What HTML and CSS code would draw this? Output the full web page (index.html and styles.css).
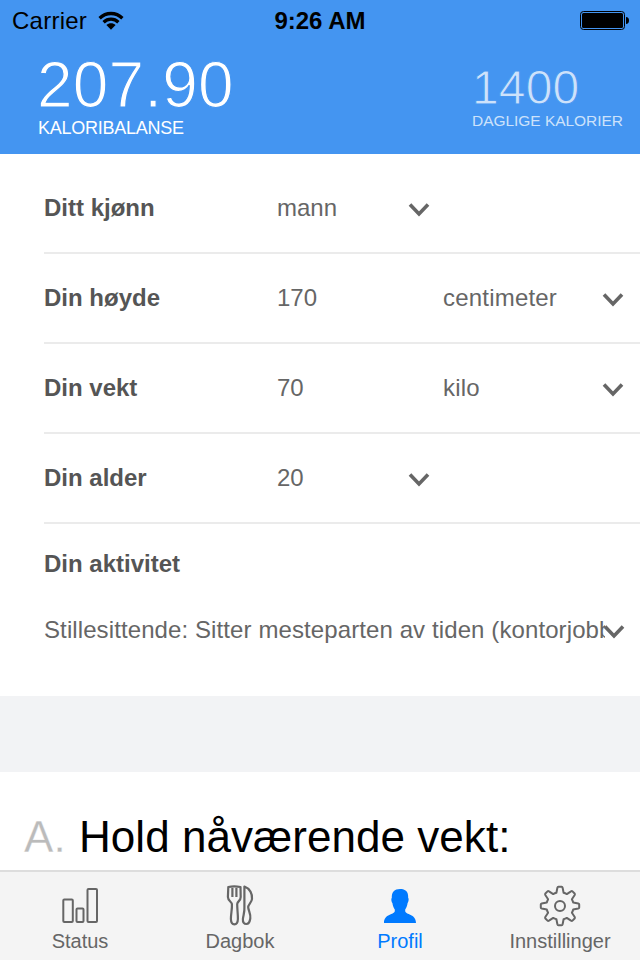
FILE: index.html
```html
<!DOCTYPE html>
<html lang="no">
<head>
<meta charset="utf-8">
<title>Profil</title>
<link rel="stylesheet" href="styles.css">
</head>
<body>
<div class="app">
  <header class="header">
    <div class="statusbar">
      <div class="carrier">
        <span>Carrier</span>
        <svg class="wifi" width="26" height="20" viewBox="0 0 26 20"><g fill="none" stroke="#000" stroke-width="3.3"><path d="M1.6 7.2C8 .9 18 .9 24.4 7.2"/><path d="M5.6 11.2C9.8 7.2 16.2 7.2 20.4 11.2"/></g><path d="M8.4 14.1C11 11.6 15 11.6 17.6 14.1L13 18.8z"/></svg>
      </div>
      <div class="time">9:26 AM</div>
      <svg class="battery" width="50" height="20" viewBox="0 0 50 20"><rect x=".5" y=".5" width="44" height="18" rx="3" fill="none" stroke="#000"/><rect x="2" y="2" width="41" height="15" rx="1.5"/><path d="M46 6c2 0 3 1.500 3 3.500s-1 3.500-3 3.500z"/></svg>
    </div>
    <div class="totals">
      <div class="balance"><div class="big">207.90</div><div class="caption">KALORIBALANSE</div></div>
      <div class="daily"><div class="big">1400</div><div class="caption">DAGLIGE KALORIER</div></div>
    </div>
  </header>
  <main class="content">
    <section class="form">
      <div class="row"><b>Ditt kjønn</b><div class="field short"><span>mann</span><svg class="chevron" width="22" height="16" viewBox="0 0 22 16"><path d="M2 2.500L11 12L20 2.500"/></svg></div></div>
      <div class="row"><b>Din høyde</b><div class="field number">170</div><div class="field unit"><span>centimeter</span><svg class="chevron" width="22" height="16" viewBox="0 0 22 16"><path d="M2 2.500L11 12L20 2.500"/></svg></div></div>
      <div class="row"><b>Din vekt</b><div class="field number">70</div><div class="field unit"><span>kilo</span><svg class="chevron" width="22" height="16" viewBox="0 0 22 16"><path d="M2 2.500L11 12L20 2.500"/></svg></div></div>
      <div class="row"><b>Din alder</b><div class="field short"><span>20</span><svg class="chevron" width="22" height="16" viewBox="0 0 22 16"><path d="M2 2.500L11 12L20 2.500"/></svg></div></div>
      <div class="activity">
        <b>Din aktivitet</b>
        <div class="select"><span>Stillesittende: Sitter mesteparten av tiden (kontorjobb)</span><svg class="chevron" width="22" height="16" viewBox="0 0 22 16"><path d="M2 2.500L11 12L20 2.500"/></svg></div>
      </div>
    </section>
    <div class="gap"></div>
    <h1 class="plan"><span class="letter">A.</span><span>Hold nåværende vekt:</span></h1>
  </main>
  <nav class="tabs">
    <div class="tab"><svg width="44" height="44" viewBox="0 0 44 44"><g fill="none" stroke="#666" stroke-width="2"><rect x="5.300" y="15.500" width="9.500" height="22.500" rx="1"/><rect x="18.500" y="24.500" width="7" height="13.500" rx="1"/><rect x="29.500" y="5" width="9.500" height="33" rx="1"/></g></svg><span>Status</span></div>
    <div class="tab"><svg width="44" height="44" viewBox="0 0 44 44"><g fill="none" stroke="#666" stroke-width="2.200" stroke-linejoin="round"><path d="M10.300 3Q16 1.800 22.500 3L22.700 13C22.700 17 19.500 17 19.200 20C19.200 26 20 30 19.900 35C19.800 38.500 18.600 40.300 16.400 40.300S13 38.500 12.900 35C12.800 30 14.300 25 13.900 20C13.600 17.500 10 17 9.900 13zM14.400 4V13M18.400 4V13"/><path d="M26.400 2.500C32 4.500 34.500 10 34 15C33.600 19 29.800 20.500 30.200 23.500C30.700 27 33 30.500 32.300 34.500C31.700 38.300 30.300 40 28.300 40S24.600 38.500 24.900 35C25.300 31 26.800 28 26.400 23z"/></g></svg><span>Dagbok</span></div>
    <div class="tab active"><svg width="44" height="44" viewBox="0 0 44 44"><path d="M22 5C27.500 5 30.500 7.500 30.200 14C31 14.500 30.700 18 29.600 19C29.200 22 28.300 24 27.200 25.500V27C27.500 31 38 29.500 38 39H6C6 29.500 16.500 31 16.800 27V25.500C15.700 24 14.800 22 14.400 19C13.300 18 13 14.500 13.800 14C13.500 8 16.500 5 22 5z" fill="#007aff"/></svg><span>Profil</span></div>
    <div class="tab"><svg width="44" height="44" viewBox="-22 -22 44 44"><g fill="none" stroke="#666" stroke-width="2" stroke-linejoin="round"><path d="M-3.600-13.200L-2.600-18.300Q-2.400-19.200-1.600-19.200H1.600Q2.400-19.200 2.600-18.300L3.600-13.200Q5.200-12.700 6.800-11.900L11-14.700Q11.900-15.200 12.500-14.600L14.600-12.500Q15.200-11.900 14.700-11L11.900-6.800Q12.700-5.200 13.200-3.600L18.300-2.600Q19.200-2.400 19.200-1.600V1.600Q19.200 2.400 18.300 2.600L13.200 3.600Q12.700 5.200 11.900 6.800L14.700 11Q15.200 11.900 14.600 12.500L12.500 14.600Q11.900 15.200 11 14.700L6.800 11.900Q5.200 12.700 3.600 13.200L2.600 18.300Q2.400 19.200 1.600 19.200H-1.600Q-2.400 19.200-2.600 18.300L-3.600 13.200Q-5.200 12.700-6.800 11.900L-11 14.700Q-11.900 15.200-12.500 14.600L-14.600 12.500Q-15.200 11.900-14.700 11L-11.900 6.800Q-12.700 5.200-13.200 3.600L-18.300 2.600Q-19.200 2.400-19.200 1.600V-1.600Q-19.200-2.400-18.300-2.600L-13.200-3.600Q-12.700-5.200-11.900-6.800L-14.700-11Q-15.200-11.900-14.600-12.500L-12.500-14.600Q-11.900-15.200-11-14.700L-6.800-11.900Q-5.200-12.700-3.600-13.200z"/><circle r="5"/></g></svg><span>Innstillinger</span></div>
  </nav>
</div>
</body>
</html>
```

FILE: styles.css
```css
* { box-sizing: border-box; }
body { margin: 0; font-family: "Liberation Sans", Arial, sans-serif; font-size: 24px; color: #666; background: #fff; }
svg { display: block; flex: none; }
.app { width: 640px; height: 960px; display: flex; flex-direction: column; overflow: hidden; }
.header { flex: none; height: 154px; background: #4495f1; }
.statusbar { height: 42px; line-height: 42px; padding: 0 10px 0 12px; display: grid; grid-template-columns: 1fr 100px 1fr; align-items: center; color: #000; }
.carrier { display: flex; align-items: center; gap: 11px; letter-spacing: .25px; }
.wifi { margin-top: -1px; }
.time { text-align: center; font-weight: bold; white-space: nowrap; margin-left: -2px; }
.battery { justify-self: end; }
.totals { display: flex; justify-content: space-between; padding: 11px 12px 0 38px; color: #fff; }
.big { font-size: 64px; line-height: 64px; margin-left: -1px; letter-spacing: .15px; -webkit-text-stroke: 1.2px #4495f1; }
.balance .caption { font-size: 18px; line-height: 22px; letter-spacing: -.25px; }
.daily { width: 156px; margin-left: auto; padding-top: 11px; color: #cde2fb; }
.daily .big { font-size: 48px; line-height: 48px; margin-left: 0; -webkit-text-stroke-width: .9px; }
.daily .caption { font-size: 15.5px; line-height: 18px; letter-spacing: -.04px; white-space: nowrap; }
.content { flex: 1; min-height: 0; overflow: hidden; }
.form { height: 542px; padding: 10px 0 0 44px; }
.row { height: 90px; line-height: 88px; border-bottom: 2px solid #ebebeb; display: grid; grid-template-columns: 233px 166px 197px; align-items: center; }
b { color: #555; }
.field { display: flex; align-items: center; justify-content: space-between; }
.field.short { width: 153px; }
.field.unit { padding-right: 16px; }
.field.unit span { letter-spacing: .2px; }
.chevron { margin-top: 3px; fill: none; stroke: #666; stroke-width: 3.6; }
.activity { padding-top: 20px; }
.activity b { display: block; line-height: 40px; }
.select { display: flex; align-items: center; margin-top: 26px; line-height: 40px; width: 581px; }
.select span { width: 561px; flex: none; overflow: hidden; white-space: nowrap; letter-spacing: .1px; }
.select .chevron { margin-left: -2px; }
.gap { height: 76px; background: #f2f3f5; }
.plan { margin: 0; padding: 40px 0 0 24px; display: flex; font-size: 44px; line-height: 50px; font-weight: normal; color: #000; white-space: nowrap; letter-spacing: .05px; }
.letter { width: 55px; color: #bbb; -webkit-text-stroke: .3px #fff; }
.tabs { flex: none; height: 90px; border-top: 2px solid #ddd; background: #f4f4f4; display: grid; grid-template-columns: repeat(4, 1fr); font-size: 20px; }
.tab { display: flex; flex-direction: column; align-items: center; padding-top: 12px; line-height: 26px; }
.active { color: #007aff; }
```
